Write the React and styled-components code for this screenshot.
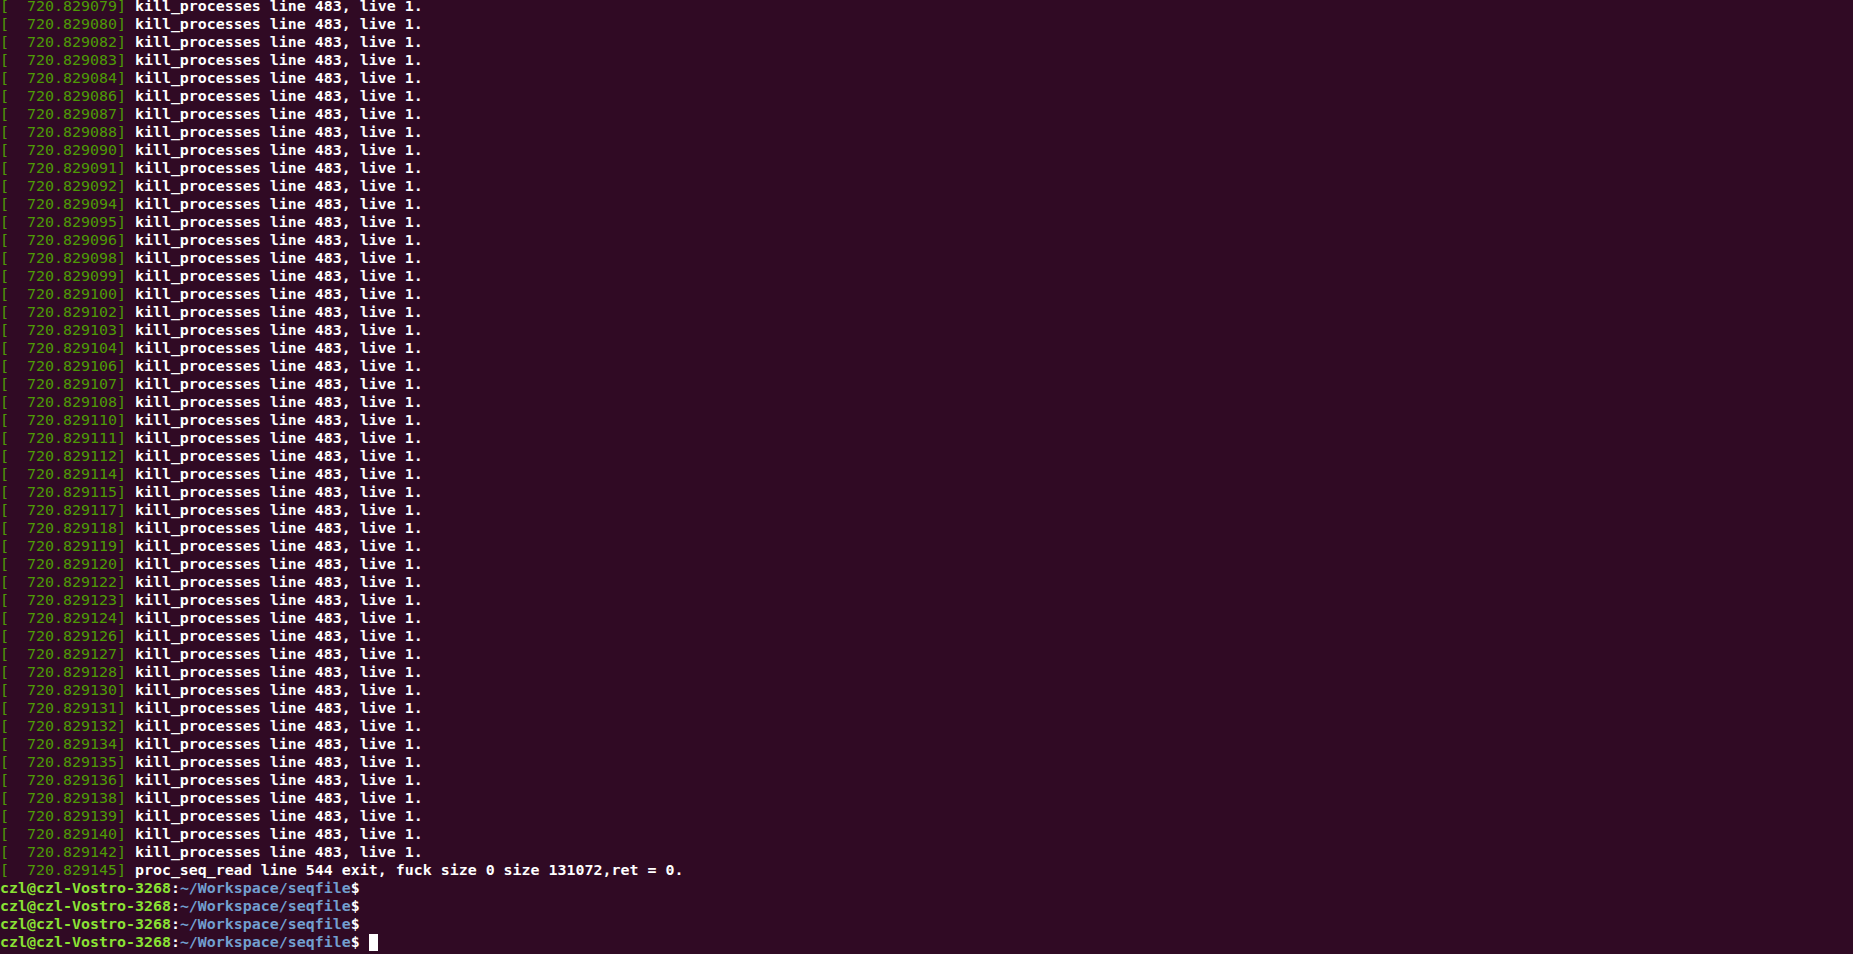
import React from 'react'
import styled, { createGlobalStyle } from 'styled-components'

const GlobalStyle = createGlobalStyle`
  html, body {
    margin: 0;
    padding: 0;
    background: #300a24;
  }
`

const Terminal = styled.div`
  height: 954px;
  overflow: hidden;
  display: flex;
  flex-direction: column;
  justify-content: flex-end;
  padding: 0 0 3px 0;
  box-sizing: border-box;
  background: #300a24;
  font-family: "DejaVu Sans Mono", "Liberation Mono", monospace;
  font-size: 14.95px;
  line-height: 18px;
  color: #ffffff;
`

const Line = styled.div`
  height: 18px;
  white-space: pre;
  flex-shrink: 0;
`

const Stamp = styled.span`
  color: #4e9a06;
`

const Msg = styled.span`
  font-weight: bold;
  color: #ffffff;
`

const User = styled.span`
  font-weight: bold;
  color: #8ae234;
`

const Path = styled.span`
  font-weight: bold;
  color: #729fcf;
`

const Cursor = styled.span`
  display: inline-block;
  width: 9px;
  height: 17px;
  vertical-align: -4px;
  background: #ffffff;
`

const stamps = [
  79, 80, 82, 83, 84, 86, 87, 88, 90, 91, 92, 94, 95, 96, 98, 99, 100, 102,
  103, 104, 106, 107, 108, 110, 111, 112, 114, 115, 117, 118, 119, 120, 122,
  123, 124, 126, 127, 128, 130, 131, 132, 134, 135, 136, 138, 139, 140, 142
]

const stamp = n => `[  720.829${String(n).padStart(3, '0')}]`

const Prompt = ({ cursor }) => (
  <Line>
    <User>czl@czl-Vostro-3268</User>
    <Msg>:</Msg>
    <Path>~/Workspace/seqfile</Path>
    <Msg>$ </Msg>
    {cursor && <Cursor />}
  </Line>
)

export default function App() {
  return (
    <>
      <GlobalStyle />
      <Terminal>
        {stamps.map(n => (
          <Line key={n}>
            <Stamp>{stamp(n)}</Stamp> <Msg>kill_processes line 483, live 1.</Msg>
          </Line>
        ))}
        <Line>
          <Stamp>{stamp(145)}</Stamp> <Msg>proc_seq_read line 544 exit, fuck size 0 size 131072,ret = 0.</Msg>
        </Line>
        <Prompt />
        <Prompt />
        <Prompt />
        <Prompt cursor />
      </Terminal>
    </>
  )
}
